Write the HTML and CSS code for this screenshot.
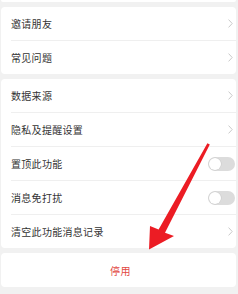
FILE: index.html
```html
<!DOCTYPE html>
<html lang="zh">
<head>
<meta charset="utf-8">
<link rel="stylesheet" href="styles.css">
</head>
<body>
<div class="page">
  <div class="card stub"></div>
  <div class="card">
    <div class="row"><div class="inner"><span>邀请朋友</span><svg class="chev" viewBox="0 0 5 9"><path d="M0.6 0.6 L4.2 4.5 L0.6 8.4" /></svg></div></div>
    <div class="row"><div class="inner line"><span>常见问题</span><svg class="chev" viewBox="0 0 5 9"><path d="M0.6 0.6 L4.2 4.5 L0.6 8.4" /></svg></div></div>
  </div>
  <div class="card">
    <div class="row"><div class="inner"><span>数据来源</span><svg class="chev" viewBox="0 0 5 9"><path d="M0.6 0.6 L4.2 4.5 L0.6 8.4" /></svg></div></div>
    <div class="row"><div class="inner line"><span>隐私及提醒设置</span><svg class="chev" viewBox="0 0 5 9"><path d="M0.6 0.6 L4.2 4.5 L0.6 8.4" /></svg></div></div>
    <div class="row"><div class="inner line toggle-row"><span>置顶此功能</span><span class="toggle"><span class="knob"></span></span></div></div>
    <div class="row"><div class="inner line toggle-row"><span>消息免打扰</span><span class="toggle"><span class="knob"></span></span></div></div>
    <div class="row"><div class="inner line"><span>清空此功能消息记录</span><svg class="chev" viewBox="0 0 5 9"><path d="M0.6 0.6 L4.2 4.5 L0.6 8.4" /></svg></div></div>
  </div>
  <div class="card action">停用</div>
  <svg class="arrow" viewBox="0 0 238 294" width="238" height="294">
    <polygon points="207.4,143.2 209.8,144.6 165,232.8 174,236 149,249.5 150,226 158.6,229.4" />
  </svg>
</div>
</body>
</html>
```

FILE: styles.css
```css
html, body {
  margin: 0;
  padding: 0;
}
body {
  background: #f1f1f1;
  font-family: "Noto Sans CJK SC", "Noto Sans", sans-serif;
  color: #333333;
  width: 238px;
  height: 294px;
  overflow: hidden;
}
.page {
  position: relative;
  display: flex;
  flex-direction: column;
  gap: 5px;
  height: 294px;
}
.card {
  background: #ffffff;
  margin: 0 2px 0 1px;
  border-radius: 4px;
  display: flex;
  flex-direction: column;
}
.stub {
  height: 2px;
  border-radius: 0 0 4px 4px;
}
.row {
  display: flex;
  padding-left: 10px;
}
.inner {
  flex: 1;
  height: 33px;
  display: flex;
  align-items: center;
  justify-content: space-between;
  padding-right: 3px;
  font-size: 10px;
  letter-spacing: 0.3px;
}
.inner.line {
  border-top: 1px solid #efefef;
}
.inner.toggle-row {
  padding-right: 1px;
}
.chev {
  width: 5px;
  height: 9px;
  fill: none;
  stroke: #bdbdbd;
  stroke-width: 0.8;
}
.toggle {
  width: 27px;
  height: 14px;
  border-radius: 7px;
  background: #dcdcdc;
  display: flex;
  align-items: center;
  padding-left: 1px;
  box-sizing: border-box;
}
.knob {
  width: 12px;
  height: 12px;
  border-radius: 50%;
  background: #ffffff;
  box-shadow: 0 0 0 0.5px #c8c8c8;
}
.action {
  height: 34px;
  align-items: center;
  justify-content: center;
  font-size: 10px;
  letter-spacing: 0.5px;
  color: #e2483f;
  padding-left: 4px;
}
.arrow {
  position: absolute;
  left: 0;
  top: 0;
  fill: #ec1c24;
}
```
